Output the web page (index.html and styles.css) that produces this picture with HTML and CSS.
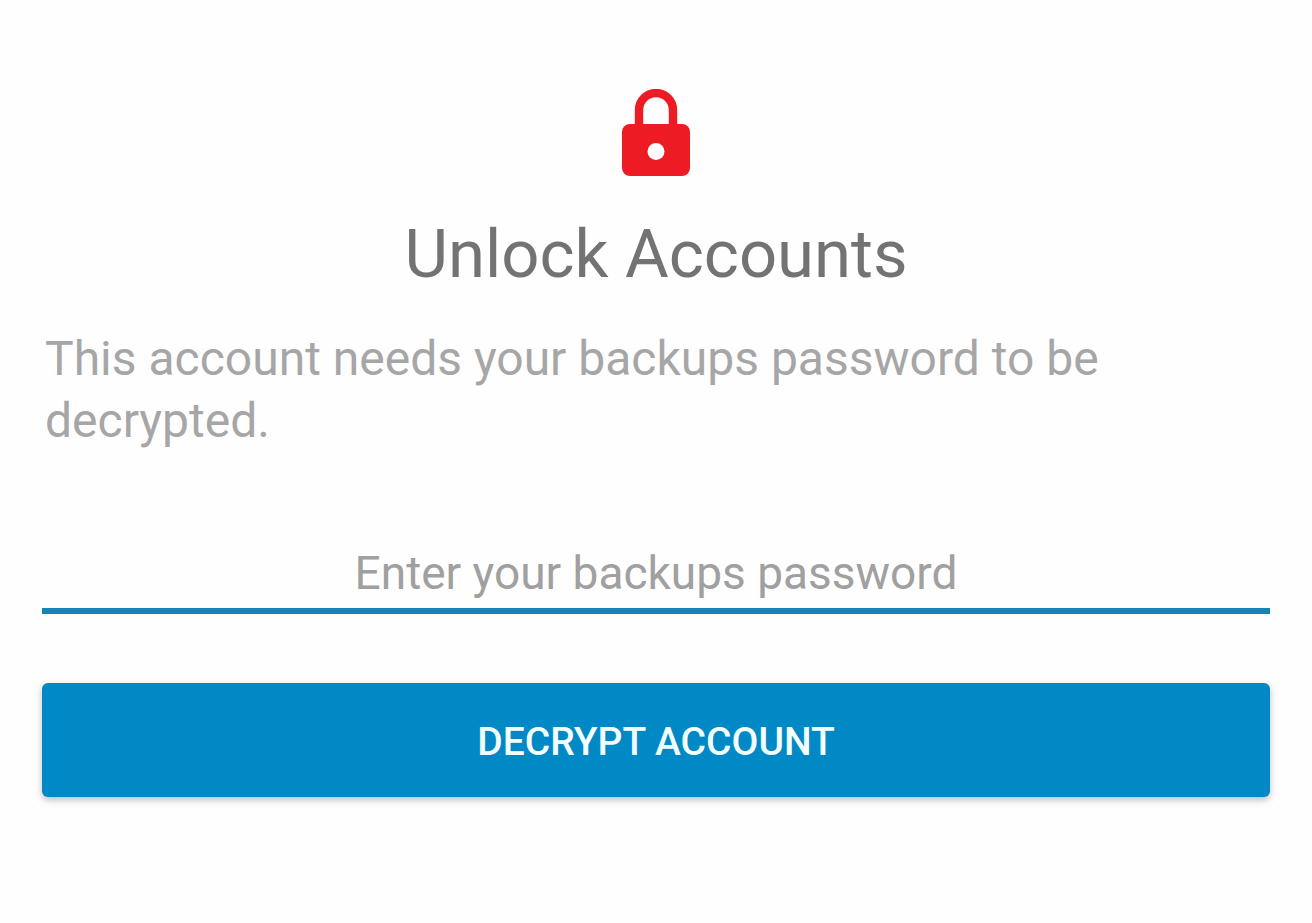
FILE: index.html
```html
<!DOCTYPE html>
<html lang="en">
<head>
<meta charset="utf-8">
<meta name="viewport" content="width=device-width, initial-scale=1">
<title>Unlock Accounts</title>
<link rel="stylesheet" href="styles.css">
</head>
<body>
<main class="unlock">
  <svg class="lock" viewBox="0 0 68 88" aria-hidden="true">
    <path class="lock-shackle" d="M17 38V21a17 17 0 0 1 34 0V38"/>
    <rect class="lock-body" y="35" width="68" height="52" rx="8"/>
    <circle class="lock-hole" cx="34" cy="62.500" r="8.500"/>
  </svg>
  <h1 class="title">Unlock Accounts</h1>
  <p class="message">This account needs your backups password to be decrypted.</p>
  <form class="form">
    <input class="password" type="password" aria-label="Backups password" placeholder="Enter your backups password">
    <button class="submit" type="button">DECRYPT ACCOUNT</button>
  </form>
</main>
</body>
</html>
```
FILE: styles.css
```css
body {
  margin: 0;
  background: #fefefe;
  font-family: Roboto, sans-serif;
}

.unlock {
  display: flex;
  flex-direction: column;
  padding: 89px 42px 40px;
}

.lock {
  align-self: center;
  width: 68px;
  height: 88px;
}

.lock-shackle {
  fill: none;
  stroke: #ed1c24;
  stroke-width: 8.4;
}

.lock-body {
  fill: #ed1c24;
}

.lock-hole {
  fill: #fefefe;
}

.title {
  margin: 35px 0 0;
  color: #737373;
  font-size: 67px;
  font-weight: 400;
  line-height: 84px;
  text-align: center;
}

.message {
  margin: 32px 3px 0;
  color: #a6a6a6;
  font-size: 48px;
  line-height: 62px;
}

.form {
  display: flex;
  flex-direction: column;
  gap: 69px;
  margin-top: 90px;
}

.password {
  box-sizing: border-box;
  width: 100%;
  height: 72px;
  padding: 0 0 4px;
  border: 0;
  border-bottom: 6px solid #1586b4;
  border-radius: 0;
  outline: 0;
  background: transparent;
  color: #737373;
  font: 400 46px Roboto, sans-serif;
  text-align: center;
}

.password::placeholder {
  color: #a0a0a0;
  opacity: 1;
}

.submit {
  height: 114px;
  padding: 4px 0 0;
  border: 0;
  border-radius: 6px;
  background: #0089c4;
  box-shadow: 0 3px 7px rgba(0, 0, 0, 0.25);
  color: #f4ffff;
  font: 500 39px Roboto, sans-serif;
}
```
